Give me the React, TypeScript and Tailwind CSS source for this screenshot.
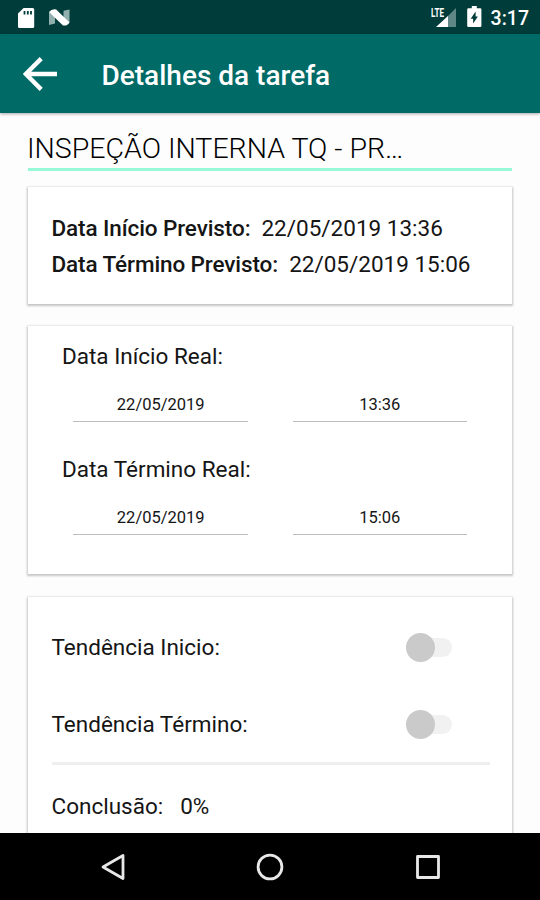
import type { ReactNode } from "react";

function StatusBar() {
  return (
    <div className="flex h-[34px] shrink-0 items-center bg-[#003c3a] pl-[18px] pr-[11px] text-white">
      <svg width="17" height="20" viewBox="0 0 17 20" className="mt-px">
        <path d="M5.6 0H14.6a1.6 1.6 0 0 1 1.6 1.6V18.4A1.6 1.6 0 0 1 14.6 20H1.6A1.6 1.6 0 0 1 0 18.4V5.6Z" fill="#fff" />
        <path d="M5.6 3h1.8v3.6H5.6zM8.9 3h1.8v3.6H8.9zM12.1 3h1.8v3.6h-1.8z" fill="#003c3a" />
      </svg>
      <svg width="21" height="17" viewBox="0 0 21 17" className="ml-[14px]">
        <path d="M0 3L6 5V14.500L0 16zM14.500 1.800 20.500 .5v13l-6-1z" fill="#8fb0ae" />
        <path d="M0 3Q2.500 -.3 7.200 .5L20.500 13.500Q18.500 17.200 14 16.500Z" fill="#fff" />
      </svg>
      <div className="ml-auto flex items-center">
        <svg width="26" height="22" viewBox="0 0 26 22">
          <path d="M25 2V21H6Z" fill="#5f8785" />
          <path d="M17 10V21H5Z" fill="#fff" />
          <text x="0" y="10.500" fill="#fff" fontFamily="Roboto, sans-serif" fontSize="12.500" fontWeight="700" textLength="13" lengthAdjust="spacingAndGlyphs">LTE</text>
        </svg>
        <svg width="15" height="22" viewBox="0 0 15 22" className="ml-[10px]">
          <path d="M4.8 0h5v2.2h3.3a1.3 1.3 0 0 1 1.3 1.3v16.2a1.3 1.3 0 0 1-1.3 1.3H1.5a1.3 1.3 0 0 1-1.3-1.3V3.500a1.3 1.3 0 0 1 1.3-1.300h3.3z" fill="#fff" />
          <path d="M8.600 5.500v5h2.300L6.100 17.500v-4.800H3.700z" fill="#003c3a" />
        </svg>
        <span className="ml-[9px] mt-[3px] text-[19.500px] font-medium leading-[22px]">3:17</span>
      </div>
    </div>
  );
}

function AppBar() {
  return (
    <header className="z-10 flex h-[79px] shrink-0 items-center bg-[#006a66] pl-[23px] text-white shadow-[0_1px_3px_rgba(0,0,0,0.35)]">
      <svg width="34" height="34" viewBox="0 0 34 34" fill="none" stroke="#fff" strokeWidth="4.400">
        <path d="M34 17H3M18.200 1.600 2.800 17l15.400 15.400" />
      </svg>
      <h1 className="ml-[44.500px] mt-[4px] text-[28px] font-medium leading-8">Detalhes da tarefa</h1>
    </header>
  );
}

function Card({ className, children }: { className: string; children: ReactNode }) {
  return (
    <section className={`shrink-0 bg-white shadow-[0_1px_2px_1px_rgba(0,0,0,0.22)] ${className}`}>
      {children}
    </section>
  );
}

function Planned({ label, value }: { label: string; value: string }) {
  return (
    <div className="flex h-9 items-center gap-[11px]">
      <span className="font-medium tracking-[-0.1px]">{label}</span>
      <span>{value}</span>
    </div>
  );
}

function Actual({ label, date, time }: { label: string; date: string; time: string }) {
  return (
    <div className="h-[112.500px]">
      <div className="h-[30px] leading-[31px]">{label}</div>
      <div className="ml-[11px] mt-4 flex gap-[45px] text-center text-[16.500px] leading-[35px]">
        <div className="h-[35px] w-[174.500px] border-b border-[#bdbdbd] pl-px">{date}</div>
        <div className="h-[35px] w-[174.500px] border-b border-[#bdbdbd]">{time}</div>
      </div>
    </div>
  );
}

function Trend({ label }: { label: string }) {
  return (
    <div className="flex h-[77px] items-center justify-between pr-[60.500px]">
      <span className="mt-[2px]">{label}</span>
      <span className="mt-px flex h-[29px] w-[46px] items-center">
        <span className="z-10 h-[29px] w-[29px] shrink-0 rounded-full bg-[#cacaca]" />
        <span className="-ml-[22px] h-[19px] w-[39px] shrink-0 rounded-full bg-[#f1f1f1]" />
      </span>
    </div>
  );
}

function NavBar() {
  return (
    <nav className="z-10 flex h-[67px] shrink-0 items-center justify-between bg-black pl-[99px] pr-[99px]">
      <svg width="26" height="28" viewBox="0 0 26 28" fill="none" stroke="#e8e8e8" strokeWidth="2.800" strokeLinejoin="round">
        <path d="M24 2.500V25.500L4 14Z" />
      </svg>
      <svg width="28" height="28" viewBox="0 0 28 28" fill="none" stroke="#e8e8e8" strokeWidth="2.800">
        <circle cx="14" cy="14" r="11.900" />
      </svg>
      <svg width="26" height="26" viewBox="0 0 26 26" fill="none" stroke="#e8e8e8" strokeWidth="2.800" strokeLinejoin="round">
        <rect x="2.500" y="2.500" width="21" height="21" />
      </svg>
    </nav>
  );
}

export default function App() {
  return (
    <div className="flex h-[900px] w-[540px] flex-col overflow-hidden bg-[#fdfdfd] font-[Roboto,sans-serif] text-[22.500px] text-[#151515]">
      <StatusBar />
      <AppBar />
      <main className="flex min-h-0 flex-1 flex-col overflow-hidden px-7">
        <h2 className="mt-[18px] h-[40px] shrink-0 border-b-[3px] border-[#98f9d9] text-[28.500px] font-light leading-[36px] text-black">
          <span className="-ml-px">INSPEÇÃO INTERNA TQ - PR…</span>
        </h2>
        <Card className="mt-4 h-[117px] pl-[23.500px] pt-[24px]">
          <Planned label="Data Início Previsto:" value="22/05/2019 13:36" />
          <Planned label="Data Término Previsto:" value="22/05/2019 15:06" />
        </Card>
        <Card className="mt-[22px] h-[248px] pl-[34px] pt-[15px]">
          <Actual label="Data Início Real:" date="22/05/2019" time="13:36" />
          <Actual label="Data Término Real:" date="22/05/2019" time="15:06" />
        </Card>
        <Card className="mt-[23px] h-[300px] pl-[23.500px] pt-[11px]">
          <Trend label="Tendência Inicio:" />
          <Trend label="Tendência Término:" />
          <div className="h-[3px] w-[438px] bg-[#efefef]" />
          <div className="mt-[24px] flex gap-[17px] leading-[34px]">
            <span>Conclusão:</span>
            <span>0%</span>
          </div>
        </Card>
      </main>
      <NavBar />
    </div>
  );
}
